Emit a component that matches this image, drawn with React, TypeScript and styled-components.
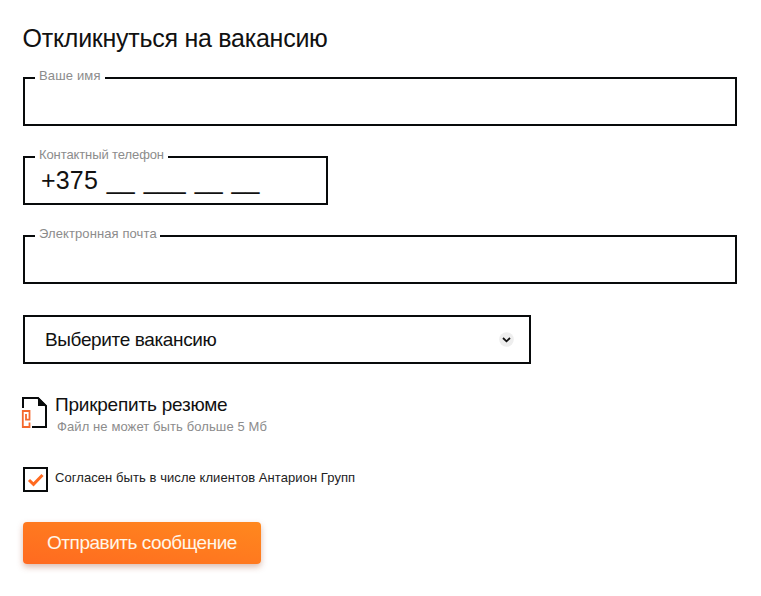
import React from "react";
import styled, { createGlobalStyle } from "styled-components";

const GlobalStyle = createGlobalStyle`
  * { box-sizing: border-box; }
  body {
    margin: 0;
    background: #fff;
    color: #111;
    font-family: "Liberation Sans", Arial, sans-serif;
  }
`;

const Form = styled.form`
  display: flex;
  flex-direction: column;
  align-items: flex-start;
  width: 761px;
  height: 596px;
  padding: 22px 24px 0 23px;
  white-space: nowrap;
`;

const Title = styled.h1`
  margin: 0 0 23px -0.5px;
  font-size: 25px;
  line-height: 32px;
  font-weight: 400;
  letter-spacing: -0.26px;
`;

const Field = styled.label<{ $width: number }>`
  position: relative;
  display: flex;
  width: ${(p) => p.$width}px;
  height: 49px;
  margin-bottom: 30px;
  border: 2px solid #080a0b;
`;

const Legend = styled.span<{ $spacing: number; $width: number }>`
  position: absolute;
  top: -11px;
  left: 10px;
  width: ${(p) => p.$width}px;
  padding-left: 4px;
  background: #fff;
  color: #8c8c8c;
  font-size: 13px;
  line-height: 16px;
  letter-spacing: ${(p) => p.$spacing}px;
`;

const Input = styled.input`
  width: 100%;
  padding: 0 0 0 16px;
  border: 0;
  outline: 0;
  background: transparent;
  color: #111;
  font: 25px "Liberation Sans", Arial, sans-serif;
  letter-spacing: 0.18px;
  word-spacing: 1.6px;
`;

const Select = styled.div`
  display: flex;
  align-items: center;
  justify-content: space-between;
  width: 508px;
  height: 49px;
  margin-top: 1px;
  padding: 0 15px 0 20px;
  border: 2px solid #080a0b;
  font-size: 19px;
  letter-spacing: -0.37px;
`;

const Attach = styled.div`
  display: flex;
  margin-top: 30px;
  height: 42px;
`;

const AttachIcon = styled.svg`
  width: 26px;
  height: 34px;
  margin: 1px 8px 0 -2px;
`;

const AttachTitle = styled.div`
  font-size: 19px;
  line-height: 22px;
  letter-spacing: -0.22px;
`;

const AttachHint = styled.div`
  margin: 3px 0 0 2px;
  color: #8c8c8c;
  font-size: 13px;
  line-height: 16px;
  letter-spacing: 0.1px;
`;

const Consent = styled.div`
  display: flex;
  align-items: flex-start;
  margin-top: 31px;
  font-size: 13px;
  line-height: 22px;
  letter-spacing: 0.07px;
  color: #222;
`;

const Check = styled.span`
  display: flex;
  width: 25px;
  height: 25px;
  margin-right: 7px;
  border: 2px solid #080a0b;
`;

const Submit = styled.button`
  width: 238px;
  height: 42px;
  margin-top: 30px;
  padding: 0;
  border: 0;
  border-radius: 4px;
  background: linear-gradient(10deg, #ff6a20, #ff881e);
  box-shadow: 0 3px 6px rgba(150, 60, 30, 0.35);
  color: #fff6e8;
  font: 19px "Liberation Sans", Arial, sans-serif;
  letter-spacing: -0.47px;
`;

export default function App() {
  return (
    <>
      <GlobalStyle />
      <Form onSubmit={(e) => e.preventDefault()}>
        <Title>Откликнуться на вакансию</Title>
        <Field $width={714}>
          <Legend $width={70} $spacing={0.15}>Ваше имя</Legend>
          <Input />
        </Field>
        <Field $width={305}>
          <Legend $width={133} $spacing={-0.1}>Контактный телефон</Legend>
          <Input defaultValue="+375 __ ___ __ __" />
        </Field>
        <Field $width={714}>
          <Legend $width={125} $spacing={0.1}>Электронная почта</Legend>
          <Input />
        </Field>
        <Select>
          <span>Выберите вакансию</span>
          <svg width="15" height="15" viewBox="0 0 15 15" fill="none">
            <circle cx="7.5" cy="7.5" r="7.3" fill="#eee" />
            <path d="M4 6l3.5 3.3L11 6" stroke="#111" strokeWidth="1.8" />
          </svg>
        </Select>
        <Attach>
          <AttachIcon viewBox="0 0 26 34" fill="none">
            <path d="M2 13V3H17L25 11V32H11" stroke="#080a0b" strokeWidth="2" />
            <path d="M17 2V11H26Z" fill="#080a0b" />
            <path d="M5 19V24.6H8.5V16H1.8V32H8.5V27.5" stroke="#f4682d" strokeWidth="1.8" />
          </AttachIcon>
          <div>
            <AttachTitle>Прикрепить резюме</AttachTitle>
            <AttachHint>Файл не может быть больше 5 Мб</AttachHint>
          </div>
        </Attach>
        <Consent>
          <Check>
            <svg width="21" height="21" viewBox="0 0 21 21" fill="none">
              <path d="M4 11L8.5 15.3L17.5 6" stroke="#ff6a20" strokeWidth="3" />
            </svg>
          </Check>
          Согласен быть в числе клиентов Антарион Групп
        </Consent>
        <Submit type="submit">Отправить сообщение</Submit>
      </Form>
    </>
  );
}
